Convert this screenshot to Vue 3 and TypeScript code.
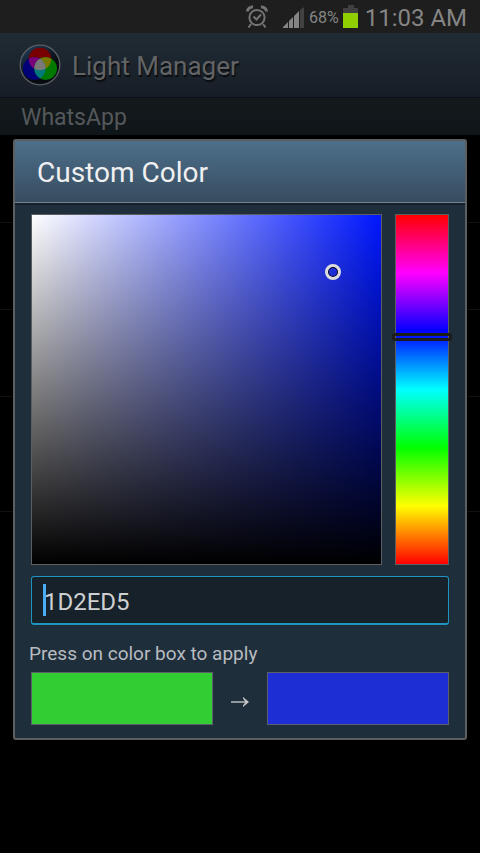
<script setup lang="ts">
import { computed, ref } from 'vue'

const hex = ref('1D2ED5')
const applied = ref('32CD32')
const hue = ref(234.5)

const rgb = computed(() => {
  const n = parseInt(hex.value, 16) || 0
  return [(n >> 16) & 255, (n >> 8) & 255, n & 255]
})
const saturation = computed(() => {
  const max = Math.max(...rgb.value)
  return max ? 1 - Math.min(...rgb.value) / max : 0
})
const brightness = computed(() => Math.max(...rgb.value) / 255)

const pureHue = computed(() => `hsl(${hue.value}, 100%, 50%)`)
const pickerStyle = computed(() => ({
  left: `${saturation.value * 100}%`,
  top: `${(1 - brightness.value) * 100}%`,
}))
const hueStyle = computed(() => ({ top: `${(1 - hue.value / 360) * 100}%` }))

function apply() {
  applied.value = hex.value
}
</script>

<template>
  <div class="screen">
    <div class="status">
      <svg class="alarm" viewBox="0 0 22 24" width="22" height="24" aria-label="Alarm">
        <g fill="none" stroke="#747474" stroke-width="2">
          <circle cx="11" cy="12.5" r="7.6" />
          <path d="M7.5 11.5l3 3 4.5-5" />
          <path d="M1.5 6.5C1.5 4 4 1.5 7 2M20.5 6.5C20.5 4 18 1.5 15 2" stroke-width="3" />
          <path d="M5 19l-2.5 3.5M17 19l2.5 3.5" />
        </g>
      </svg>
      <svg class="signal" viewBox="0 0 22 21" width="22" height="21" aria-label="Signal">
        <path d="M0 21v-1l5-5v6zM6 21v-7l4-4v11zM11 21V9l5-5v17z" fill="#858585" />
        <path d="M17 21V3l4-3v21z" fill="#414141" />
      </svg>
      <span class="percent">68%</span>
      <svg class="battery" viewBox="0 0 15 23" width="15" height="23" aria-label="Battery">
        <path d="M5 0h6v3h4v6H0V3h5z" fill="#404040" />
        <path d="M0 8h15v15H0z" fill="#91d000" />
      </svg>
      <span class="clock">11:03 AM</span>
    </div>

    <header class="appbar">
      <svg class="logo" viewBox="0 0 42 42" width="42" height="42" aria-hidden="true">
        <defs>
          <linearGradient id="disc" x1="0" y1="0" x2="0.6" y2="1">
            <stop offset="0" stop-color="#24405f" />
            <stop offset="0.7" stop-color="#080c12" />
          </linearGradient>
          <clipPath id="red"><circle cx="21" cy="15" r="11.3" /></clipPath>
          <clipPath id="blue"><circle cx="15.3" cy="24.6" r="11.3" /></clipPath>
        </defs>
        <circle cx="21" cy="21" r="19.8" fill="url(#disc)" stroke="#5a5e62" stroke-width="1.3" />
        <circle cx="21" cy="15" r="11.3" fill="#790000" />
        <circle cx="15.3" cy="24.6" r="11.3" fill="#000079" />
        <circle cx="26.7" cy="24.6" r="11.3" fill="#007900" />
        <g clip-path="url(#red)">
          <circle cx="15.3" cy="24.6" r="11.3" fill="#790079" />
          <circle cx="26.7" cy="24.6" r="11.3" fill="#797900" />
        </g>
        <g clip-path="url(#blue)">
          <circle cx="26.7" cy="24.6" r="11.3" fill="#007979" />
          <g clip-path="url(#red)">
            <circle cx="26.7" cy="24.6" r="11.3" fill="#797979" />
          </g>
        </g>
      </svg>
      <h1>Light Manager</h1>
    </header>
    <h2 class="section">WhatsApp</h2>
    <ul class="rows" aria-hidden="true">
      <li></li>
      <li></li>
      <li></li>
      <li class="tall"></li>
    </ul>

    <div class="overlay">
      <section class="dialog" role="dialog" aria-labelledby="dialog-title">
        <h3 id="dialog-title">Custom Color</h3>
        <div class="body">
          <div class="pickers">
            <div class="shade">
              <div class="tint" :style="{ backgroundColor: pureHue }"></div>
              <span class="ring" :style="pickerStyle"></span>
            </div>
            <div class="hue">
              <input v-model.number="hue" type="range" min="0" max="360" step="0.5" aria-label="Hue" />
              <span class="bar" :style="hueStyle"></span>
            </div>
          </div>
          <div class="field">
            <input v-model="hex" type="text" maxlength="6" aria-label="Hex color" />
            <span class="caret"></span>
          </div>
          <p>Press on color box to apply</p>
          <div class="swatches">
            <button type="button" aria-label="Current color" :style="{ backgroundColor: '#' + applied }"></button>
            <svg viewBox="0 0 20 12" width="20" height="12" aria-hidden="true">
              <path d="M1 6h16" stroke="#c4c6c8" stroke-width="1.4" />
              <path d="M13 1l6 5-6 5v-1.5l2.5-3.5L13 2.5z" fill="#c4c6c8" />
            </svg>
            <button type="button" aria-label="New color" :style="{ backgroundColor: '#' + hex }" @click="apply"></button>
          </div>
        </div>
      </section>
    </div>
  </div>
</template>

<style>
body {
  background: #000;
}
</style>

<style scoped>
.screen {
  min-height: 100vh;
  background: #000;
  font-family: Roboto, "Liberation Sans", sans-serif;
}
h1,
h2,
h3,
p,
ul {
  margin: 0;
  padding: 0;
  font-weight: 400;
}
.status {
  display: flex;
  align-items: center;
  justify-content: flex-end;
  height: 33px;
  padding-right: 13px;
  background: #1e1e1e;
  color: #858585;
}
.signal {
  margin: 2px 4px 0 15px;
}
.percent {
  padding-top: 2px;
  font-size: 16px;
}
.battery {
  margin: 0 7px 0 4px;
}
.clock {
  padding-top: 2px;
  font-size: 24px;
}
.appbar {
  display: flex;
  align-items: center;
  gap: 11px;
  box-sizing: border-box;
  height: 65px;
  padding-left: 19px;
  border-bottom: 1px solid #0c1014;
  background: linear-gradient(#202c34, #171d26);
}
h1 {
  padding-top: 2px;
  color: #626466;
  font-size: 26px;
  line-height: 32px;
  text-shadow: 1px 2px 1px #0a0d10;
}
.section {
  box-sizing: border-box;
  height: 37px;
  padding-left: 21px;
  background: linear-gradient(#14191c, #0f161a);
  color: #54585a;
  font-size: 23px;
  line-height: 39px;
}
.rows {
  padding-top: 1px;
  list-style: none;
}
.rows li {
  box-sizing: border-box;
  height: 87px;
  border-bottom: 1px solid #111;
}
.rows .tall {
  height: 115px;
}
.overlay {
  position: absolute;
  inset: 0;
  padding: 139px 13px 0;
}
.dialog {
  border: 2px solid #5c5e60;
  border-radius: 3px;
  background: #1f2e3b;
}
h3 {
  height: 61px;
  padding-left: 22px;
  border-bottom: 1px solid #75818c;
  background: linear-gradient(#4d6f8a, #374c60);
  box-shadow: 0 2px 0 #15222d;
  color: #f0f0f0;
  font-size: 28px;
  line-height: 63px;
}
.body {
  padding: 11px 16px 13px;
}
.pickers {
  display: flex;
  gap: 13px;
}
.shade {
  position: relative;
  flex: 1;
  aspect-ratio: 1;
  border: 1px solid #5c5e60;
}
.tint {
  height: 100%;
  background-image: linear-gradient(transparent, #000), linear-gradient(to right, #fff, transparent);
}
.ring {
  position: absolute;
  box-sizing: border-box;
  width: 16px;
  height: 16px;
  margin: -8px;
  border: 3px solid #ddd;
  border-radius: 50%;
  box-shadow: inset 0 0 0 1px #000;
}
.hue {
  position: relative;
  width: 52px;
  border: 1px solid #5c5e60;
  background: linear-gradient(#f00, #f0f, #00f, #0ff, #0f0, #ff0, #f00);
}
.hue input {
  position: absolute;
  inset: 0;
  width: 100%;
  height: 100%;
  margin: 0;
  opacity: 0;
  writing-mode: vertical-lr;
  direction: rtl;
}
.bar {
  position: absolute;
  box-sizing: border-box;
  left: -4px;
  right: -4px;
  height: 8px;
  margin-top: -4px;
  border: 3px solid #1c1c1c;
  border-radius: 3px;
  pointer-events: none;
}
.field {
  position: relative;
  margin-top: 11px;
}
.field input {
  display: block;
  box-sizing: border-box;
  width: 100%;
  height: 49px;
  padding: 4px 12px 0;
  border: 1px solid #1e94bf;
  border-bottom-width: 2px;
  border-radius: 3px;
  outline: none;
  background: #16212a;
  color: #cecfd0;
  font: 24px Roboto, "Liberation Sans", sans-serif;
}
.caret {
  position: absolute;
  left: 12px;
  top: 8px;
  width: 3px;
  height: 32px;
  background: #4aacf4;
}
p {
  margin: 17px 0 7px -2px;
  color: #b8bcc0;
  font-size: 19px;
  line-height: 23px;
}
.swatches {
  display: flex;
  align-items: center;
  gap: 17px;
}
.swatches button {
  flex: 1;
  height: 53px;
  padding: 0;
  border: 1px solid #5c6068;
}
.swatches svg {
  margin-top: 7px;
}
</style>
